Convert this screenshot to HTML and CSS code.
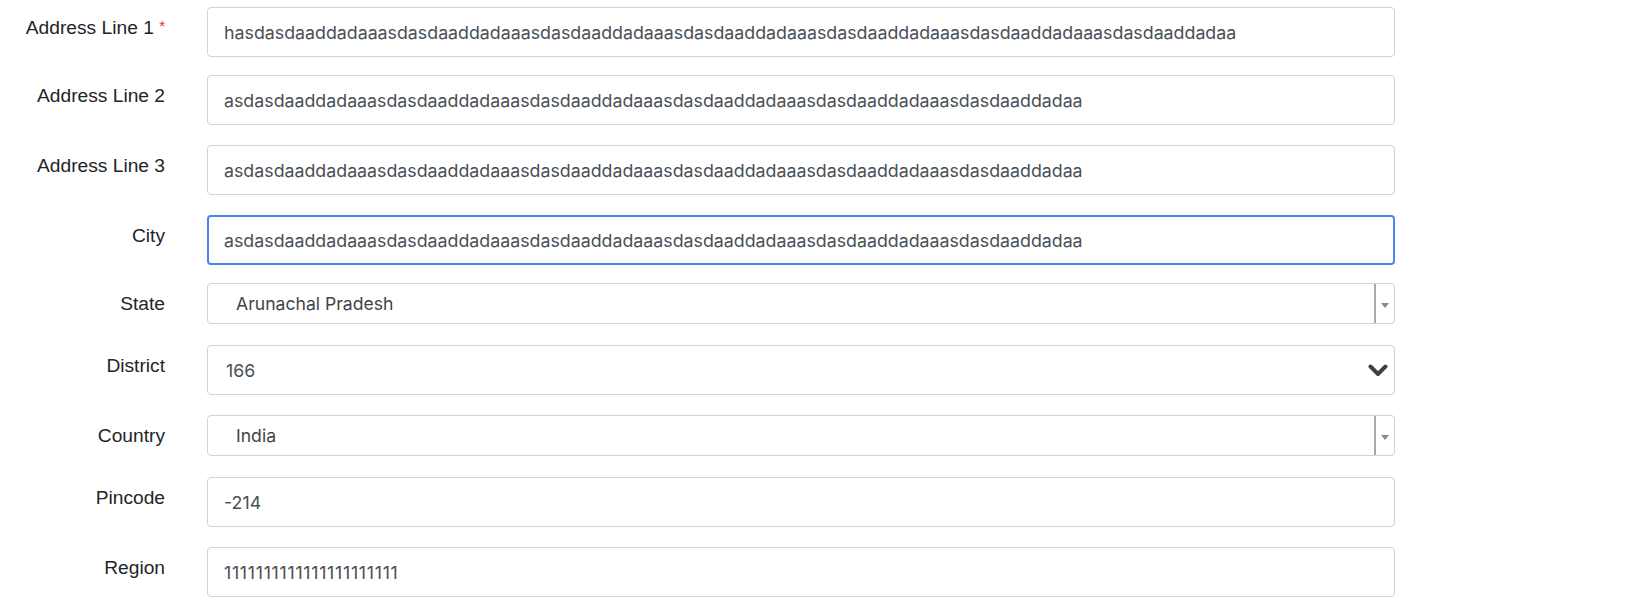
FILE: index.html
```html
<!DOCTYPE html>
<html lang="en">
<head>
<meta charset="utf-8">
<title>Address form</title>
<link rel="stylesheet" href="styles.css">
</head>
<body>
<form class="form">
  <div class="row row-tight">
    <label class="label" for="a1">Address Line 1 <span class="req">*</span></label>
    <input class="control" id="a1" type="text" value="hasdasdaaddadaaasdasdaaddadaaasdasdaaddadaaasdasdaaddadaaasdasdaaddadaaasdasdaaddadaaasdasdaaddadaa">
  </div>
  <div class="row">
    <label class="label" for="a2">Address Line 2</label>
    <input class="control" id="a2" type="text" value="asdasdaaddadaaasdasdaaddadaaasdasdaaddadaaasdasdaaddadaaasdasdaaddadaaasdasdaaddadaa">
  </div>
  <div class="row">
    <label class="label" for="a3">Address Line 3</label>
    <input class="control" id="a3" type="text" value="asdasdaaddadaaasdasdaaddadaaasdasdaaddadaaasdasdaaddadaaasdasdaaddadaaasdasdaaddadaa">
  </div>
  <div class="row row-tight">
    <label class="label" for="city">City</label>
    <input class="control control-focus" id="city" type="text" value="asdasdaaddadaaasdasdaaddadaaasdasdaaddadaaasdasdaaddadaaasdasdaaddadaaasdasdaaddadaa">
  </div>
  <div class="row row-select2">
    <span class="label">State</span>
    <div class="select2">
      <span class="select2-text">Arunachal Pradesh</span>
      <span class="select2-arrow"><svg width="8" height="5" viewBox="0 0 8 5"><path d="M0 0H8L4 5Z" fill="#888"/></svg></span>
    </div>
  </div>
  <div class="row">
    <span class="label">District</span>
    <div class="select-native">
      <span class="select-text">166</span>
      <svg class="chevron" width="20" height="13" viewBox="0 0 20 13"><path d="M2.5 2.5L10 10L17.5 2.5" fill="none" stroke="#3d4247" stroke-width="4" stroke-linecap="round" stroke-linejoin="round"/></svg>
    </div>
  </div>
  <div class="row row-select2">
    <span class="label">Country</span>
    <div class="select2">
      <span class="select2-text">India</span>
      <span class="select2-arrow"><svg width="8" height="5" viewBox="0 0 8 5"><path d="M0 0H8L4 5Z" fill="#888"/></svg></span>
    </div>
  </div>
  <div class="row">
    <label class="label" for="pin">Pincode</label>
    <input class="control" id="pin" type="text" value="-214">
  </div>
  <div class="row">
    <label class="label" for="region">Region</label>
    <input class="control control-digits" id="region" type="text" value="1111111111111111111111">
  </div>
</form>
</body>
</html>
```

FILE: styles.css
```css
html, body {
  margin: 0;
  padding: 0;
  background: #ffffff;
}

.form {
  padding-top: 7px;
  display: flex;
  flex-direction: column;
}

.row {
  display: grid;
  grid-template-columns: 165px 1188px;
  column-gap: 42px;
  align-items: start;
  margin-bottom: 20px;
}

.row-tight {
  margin-bottom: 18px;
}

.row-select2 {
  margin-bottom: 21px;
}

.label {
  font-family: "Liberation Sans", Arial, sans-serif;
  font-size: 19.2px;
  line-height: 28px;
  color: #212529;
  text-align: right;
  padding-top: 7px;
  white-space: nowrap;
}

.req {
  color: #e0312f;
  font-size: 15px;
  vertical-align: top;
  position: relative;
  top: -2px;
}

.control {
  box-sizing: border-box;
  width: 1188px;
  height: 50px;
  margin: 0;
  padding: 0 16px;
  border: 1px solid #ced4da;
  border-radius: 4px;
  background: #fff;
  font-family: Inter, "Noto Sans", sans-serif;
  font-size: 17.8px;
  color: #495057;
  outline: none;
}

.control-digits {
  letter-spacing: 0.7px;
}

.control-focus {
  border: 2px solid #4a82ef;
  padding: 0 15px;
}

.select2 {
  box-sizing: border-box;
  height: 41px;
  border: 1px solid #ced4da;
  border-radius: 4px;
  background: #fff;
  display: flex;
  align-items: stretch;
  font-family: Inter, "Noto Sans", sans-serif;
  font-size: 17.6px;
  color: #444;
}

.select2-text {
  flex: 1;
  display: flex;
  align-items: center;
  padding-left: 28px;
}

.select2-arrow {
  width: 18px;
  border-left: 2px solid #a9a9a9;
  display: flex;
  align-items: center;
  justify-content: center;
  padding-top: 3px;
}

.select-native {
  box-sizing: border-box;
  height: 50px;
  border: 1px solid #ced4da;
  border-radius: 4px;
  background: #fff;
  display: flex;
  align-items: center;
  padding: 0 6px 0 18px;
  font-family: Inter, "Noto Sans", sans-serif;
  font-size: 17.8px;
  color: #495057;
}

.select-text {
  flex: 1;
}

.chevron {
  display: block;
}
```
